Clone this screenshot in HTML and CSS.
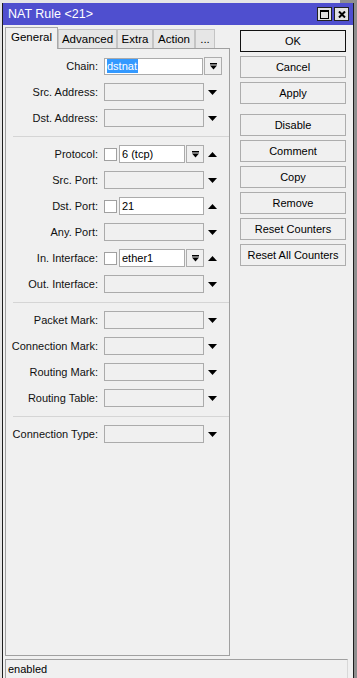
FILE: index.html
```html
<!DOCTYPE html>
<html lang="en">
<head>
    <meta charset="UTF-8">
    <meta name="viewport" content="width=device-width, initial-scale=1.0">
    <title>NAT Rule</title>
    <link rel="stylesheet" href="styles.css">
</head>
<body>
<div class="window">
    <div class="titlebar">
        <span class="title">NAT Rule &lt;21&gt;</span>
        <div class="title_buttons">
            <span class="tbtn">
                <svg width="9" height="9" viewBox="0 0 9 9"><rect x="0.5" y="0.5" width="8" height="8" fill="none" stroke="#000"/><rect x="0" y="0" width="9" height="2" fill="#000"/></svg>
            </span>
            <span class="tbtn">
                <svg width="8" height="7" viewBox="0 0 8 7"><path d="M1 0.5 L7 6.5 M7 0.5 L1 6.5" stroke="#000" stroke-width="2"/></svg>
            </span>
        </div>
    </div>

    <div class="main">
        <div class="left">
            <div class="tabs">
                <span class="tab active" style="width:53px">General</span>
                <span class="tab" style="width:59px">Advanced</span>
                <span class="tab" style="width:36px">Extra</span>
                <span class="tab" style="width:42px">Action</span>
                <span class="tab" style="width:20px">...</span>
            </div>
            <div class="panel">
                <!-- chain -->
                <div class="row">
                    <span class="label">Chain:</span>
                    <span class="input white chain"><span class="sel">dstnat</span></span>
                    <span class="dd"><svg width="7" height="7" viewBox="0 0 7 7"><rect x="0" y="0" width="7" height="1.5" fill="#000"/><polygon points="0,2.5 7,2.5 3.5,6.5" fill="#000"/></svg></span>
                </div>
                <div class="row">
                    <span class="label">Src. Address:</span>
                    <span class="input wide"></span>
                    <span class="arrow"><svg width="9" height="5" viewBox="0 0 9 5"><polygon points="0,0 9,0 4.5,5" fill="#000"/></svg></span>
                </div>
                <div class="row">
                    <span class="label">Dst. Address:</span>
                    <span class="input wide"></span>
                    <span class="arrow"><svg width="9" height="5" viewBox="0 0 9 5"><polygon points="0,0 9,0 4.5,5" fill="#000"/></svg></span>
                </div>

                <div class="sep"></div>

                <div class="row">
                    <span class="label">Protocol:</span>
                    <span class="check"></span>
                    <span class="input white short">6 (tcp)</span>
                    <span class="dd"><svg width="7" height="7" viewBox="0 0 7 7"><rect x="0" y="0" width="7" height="1.5" fill="#000"/><polygon points="0,2.5 7,2.5 3.5,6.5" fill="#000"/></svg></span>
                    <span class="arrow"><svg width="9" height="5" viewBox="0 0 9 5"><polygon points="0,5 9,5 4.5,0" fill="#000"/></svg></span>
                </div>
                <div class="row">
                    <span class="label">Src. Port:</span>
                    <span class="input wide"></span>
                    <span class="arrow"><svg width="9" height="5" viewBox="0 0 9 5"><polygon points="0,0 9,0 4.5,5" fill="#000"/></svg></span>
                </div>
                <div class="row">
                    <span class="label">Dst. Port:</span>
                    <span class="check"></span>
                    <span class="input white medium">21</span>
                    <span class="arrow"><svg width="9" height="5" viewBox="0 0 9 5"><polygon points="0,5 9,5 4.5,0" fill="#000"/></svg></span>
                </div>
                <div class="row">
                    <span class="label">Any. Port:</span>
                    <span class="input wide"></span>
                    <span class="arrow"><svg width="9" height="5" viewBox="0 0 9 5"><polygon points="0,0 9,0 4.5,5" fill="#000"/></svg></span>
                </div>
                <div class="row">
                    <span class="label">In. Interface:</span>
                    <span class="check"></span>
                    <span class="input white short">ether1</span>
                    <span class="dd"><svg width="7" height="7" viewBox="0 0 7 7"><rect x="0" y="0" width="7" height="1.5" fill="#000"/><polygon points="0,2.5 7,2.5 3.5,6.5" fill="#000"/></svg></span>
                    <span class="arrow"><svg width="9" height="5" viewBox="0 0 9 5"><polygon points="0,5 9,5 4.5,0" fill="#000"/></svg></span>
                </div>
                <div class="row">
                    <span class="label">Out. Interface:</span>
                    <span class="input wide"></span>
                    <span class="arrow"><svg width="9" height="5" viewBox="0 0 9 5"><polygon points="0,0 9,0 4.5,5" fill="#000"/></svg></span>
                </div>

                <div class="sep"></div>

                <div class="row">
                    <span class="label">Packet Mark:</span>
                    <span class="input wide"></span>
                    <span class="arrow"><svg width="9" height="5" viewBox="0 0 9 5"><polygon points="0,0 9,0 4.5,5" fill="#000"/></svg></span>
                </div>
                <div class="row">
                    <span class="label">Connection Mark:</span>
                    <span class="input wide"></span>
                    <span class="arrow"><svg width="9" height="5" viewBox="0 0 9 5"><polygon points="0,0 9,0 4.5,5" fill="#000"/></svg></span>
                </div>
                <div class="row">
                    <span class="label">Routing Mark:</span>
                    <span class="input wide"></span>
                    <span class="arrow"><svg width="9" height="5" viewBox="0 0 9 5"><polygon points="0,0 9,0 4.5,5" fill="#000"/></svg></span>
                </div>
                <div class="row">
                    <span class="label">Routing Table:</span>
                    <span class="input wide"></span>
                    <span class="arrow"><svg width="9" height="5" viewBox="0 0 9 5"><polygon points="0,0 9,0 4.5,5" fill="#000"/></svg></span>
                </div>

                <div class="sep"></div>

                <div class="row">
                    <span class="label">Connection Type:</span>
                    <span class="input wide"></span>
                    <span class="arrow"><svg width="9" height="5" viewBox="0 0 9 5"><polygon points="0,0 9,0 4.5,5" fill="#000"/></svg></span>
                </div>
            </div>
        </div>

        <div class="buttons">
            <button class="button default">OK</button>
            <button class="button">Cancel</button>
            <button class="button">Apply</button>
            <button class="button group">Disable</button>
            <button class="button">Comment</button>
            <button class="button">Copy</button>
            <button class="button">Remove</button>
            <button class="button">Reset Counters</button>
            <button class="button">Reset All Counters</button>
        </div>
    </div>

    <div class="status">enabled</div>
</div>
</body>
</html>
```

FILE: styles.css
```css
body {
    margin: 0;
    height: 678px;
    overflow: hidden;
    background: linear-gradient(to right, #e6e6e6 0, #e6e6e6 340px, #8f8f8f 340px);
    font-family: "Liberation Sans", Arial, sans-serif;
    font-size: 11px;
    color: #000;
}

.window {
    margin: 3px 0 0 2px;
    width: 350px;
    height: 680px;
    background: #f0f0f0;
    border-left: 1px solid #1e1e1e;
    border-right: 1px solid #1e1e1e;
}

/* title bar */
.titlebar {
    height: 22px;
    background: #4f4fcf;
    color: #fff;
    display: flex;
    align-items: center;
    justify-content: space-between;
    padding-left: 5px;
    padding-right: 4px;
}
.title {
    font-size: 12.5px;
}
.title_buttons {
    display: flex;
    gap: 2px;
}
.tbtn {
    width: 15px;
    height: 14px;
    box-sizing: border-box;
    border: 1px solid #222;
    background: #e2e2e2;
    display: flex;
    align-items: center;
    justify-content: center;
}

.main {
    display: flex;
}

.left {
    margin: 2px 0 0 2px;
    width: 225px;
}

/* tabs */
.tabs {
    display: flex;
    align-items: flex-end;
    height: 21px;
}
.tab {
    box-sizing: border-box;
    height: 19px;
    display: flex;
    align-items: center;
    justify-content: center;
    border: 1px solid #c4c4c4;
    border-bottom: none;
    background: #e6e6e6;
    font-size: 11.5px;
}
.tab.active {
    position: relative;
    z-index: 1;
    height: 22px;
    margin-bottom: -1px;
    background: #f0f0f0;
    border-color: #a8a8a8;
    padding-bottom: 3px;
}

/* form panel */
.panel {
    box-sizing: border-box;
    height: 608px;
    border: 1px solid #a0a0a0;
    padding-top: 8px;
}

.row {
    display: flex;
    align-items: center;
    height: 18px;
    margin-bottom: 8px;
}
.label {
    width: 92px;
    margin-right: 6px;
    text-align: right;
    white-space: nowrap;
    color: #111;
}

.input {
    box-sizing: border-box;
    height: 18px;
    border: 1px solid #ababab;
    background: #f0f0f0;
    display: flex;
    align-items: center;
    padding-left: 2px;
}
.input.white {
    background: #fff;
}
.input.wide { width: 100px; }
.input.chain { width: 99px; height: 17px; }
.input.short { width: 66px; }
.input.medium { width: 85px; }

.sel {
    background: #3399ff;
    color: #fff;
    height: 14px;
    line-height: 14px;
    padding-right: 1px;
}

.check {
    box-sizing: border-box;
    width: 13px;
    height: 13px;
    border: 1px solid #a0a0a0;
    background: #fff;
    margin-right: 2px;
}

.dd {
    box-sizing: border-box;
    width: 18px;
    height: 18px;
    margin-left: 1px;
    border: 1px solid #adadad;
    background: #f0f0f0;
    display: flex;
    align-items: center;
    justify-content: center;
}

.arrow {
    margin-left: 4px;
    width: 9px;
    display: flex;
    align-items: center;
}

/* top margin collapses with the row above */
.sep {
    height: 1px;
    margin: 9px 0 8px 7px;
    background: #d5d5d5;
}

/* right button column */
.buttons {
    margin: 5px 0 0 10px;
    width: 106px;
    display: flex;
    flex-direction: column;
    gap: 4px;
}
.button {
    box-sizing: border-box;
    height: 22px;
    border: 1px solid #adadad;
    background: #f0f0f0;
    font-family: "Liberation Sans", Arial, sans-serif;
    font-size: 11px;
    color: #000;
    padding: 0;
}
.button.default {
    border-color: #111;
}
.button.group {
    margin-top: 6px;
}

/* status bar */
.status {
    box-sizing: border-box;
    margin: 3px 0 0 2px;
    width: 343px;
    height: 22px;
    border-top: 1px solid #a0a0a0;
    border-left: 1px solid #a0a0a0;
    border-right: 1px solid #d8d8d8;
    padding: 3px 0 0 2px;
}
```
